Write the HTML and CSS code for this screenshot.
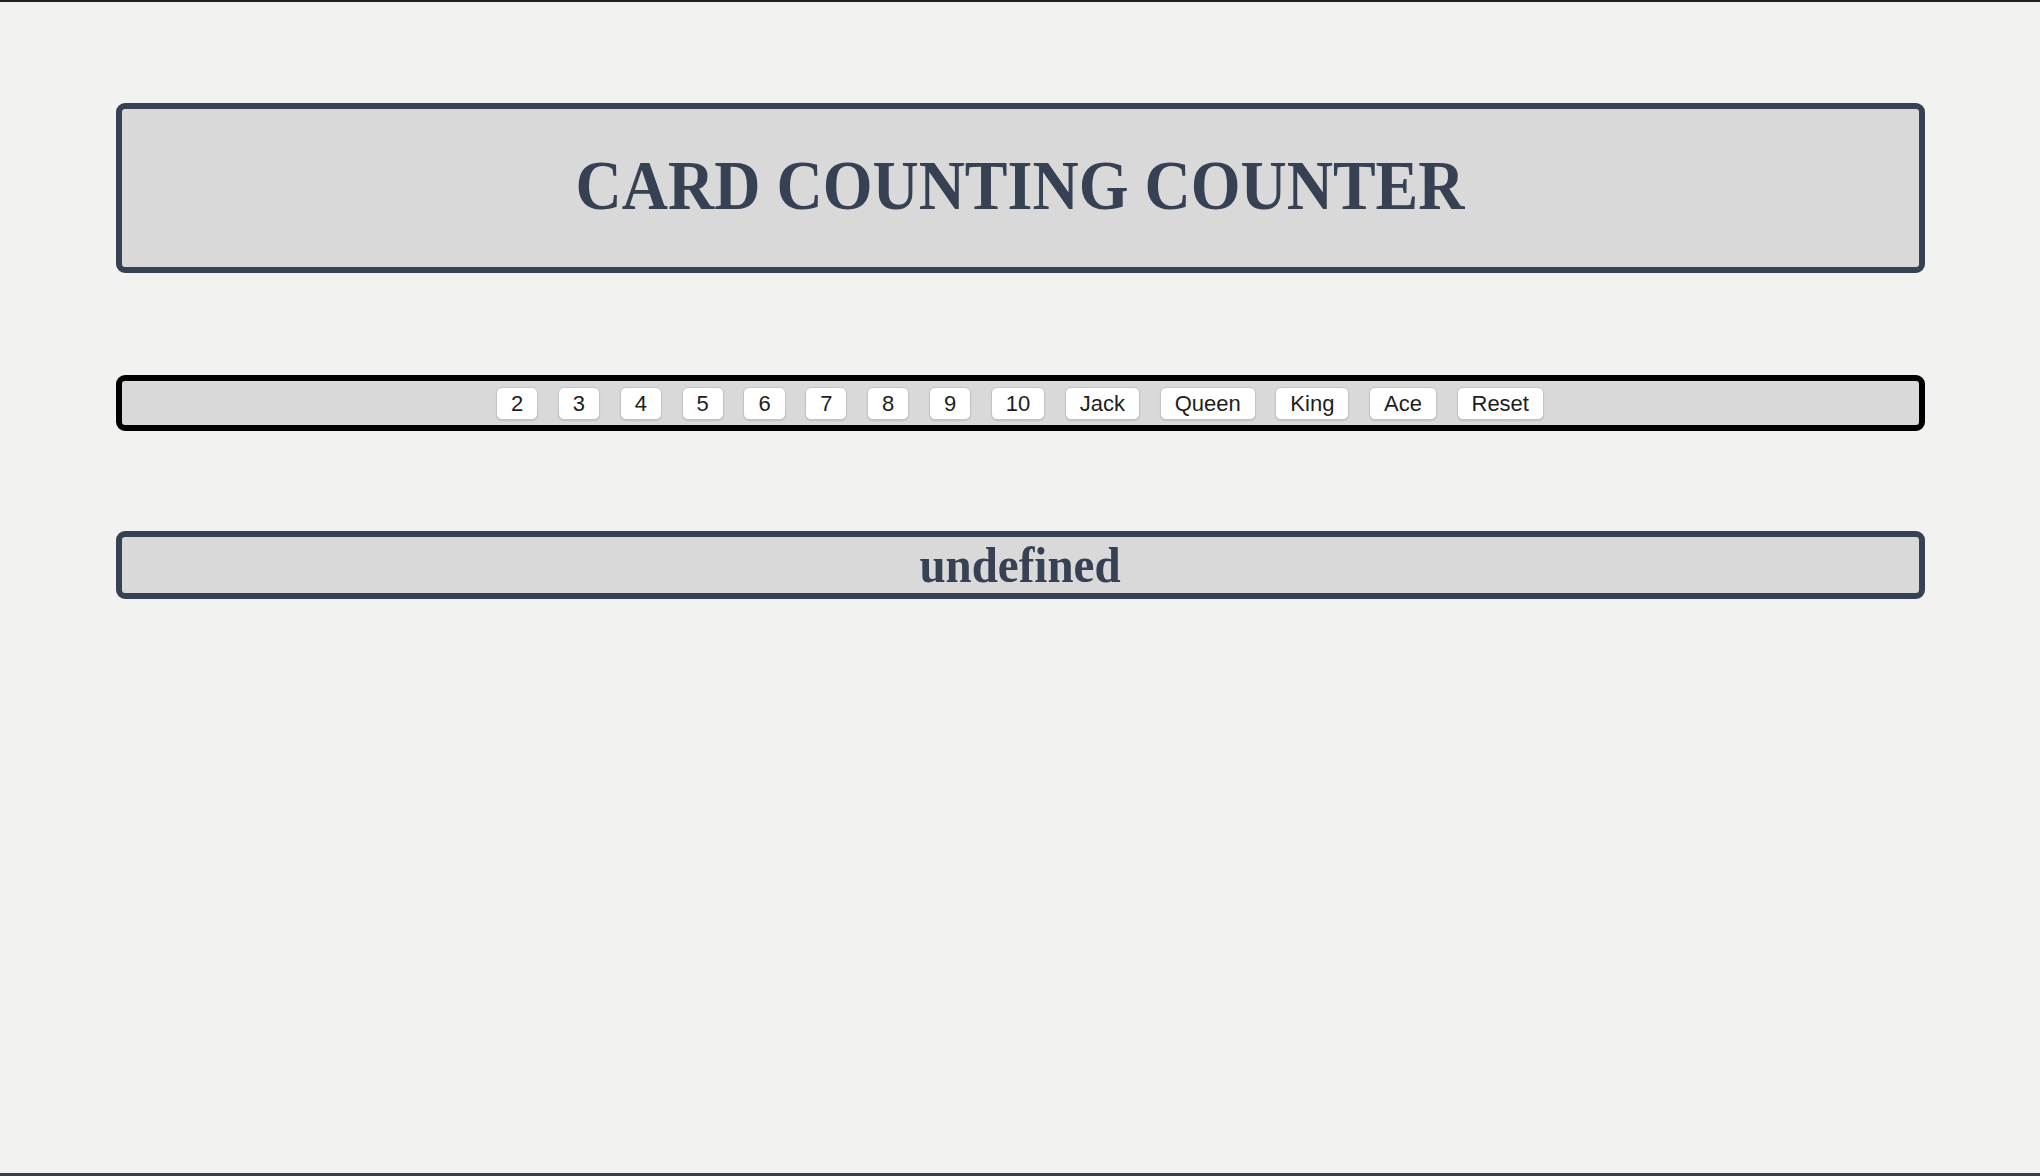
FILE: index.html
```html
<!DOCTYPE html>
<html lang="en">
<head>
<meta charset="utf-8">
<title>Card Counting Counter</title>
<link rel="stylesheet" href="styles.css">
</head>
<body>
<main class="page">
  <header class="panel header">
    <h1 class="title">CARD COUNTING COUNTER</h1>
  </header>
  <section class="bar">
    <button class="card-btn">2</button>
    <button class="card-btn">3</button>
    <button class="card-btn">4</button>
    <button class="card-btn">5</button>
    <button class="card-btn">6</button>
    <button class="card-btn">7</button>
    <button class="card-btn">8</button>
    <button class="card-btn">9</button>
    <button class="card-btn">10</button>
    <button class="card-btn">Jack</button>
    <button class="card-btn">Queen</button>
    <button class="card-btn">King</button>
    <button class="card-btn">Ace</button>
    <button class="card-btn">Reset</button>
  </section>
  <section class="panel result">
    <h2 class="count">undefined</h2>
  </section>
</main>
</body>
</html>
```
FILE: styles.css
```css
html {
  height: 100%;
  box-sizing: border-box;
  background: #f2f2f1;
  border-top: 2px solid #1f1f1f;
  border-bottom: 3px solid #3b3f47;
}
body {
  margin: 0;
  font-family: "Liberation Serif", "Times New Roman", serif;
}
.page {
  width: 1809px;
  margin: 0 auto;
  padding-top: 101px;
  display: flex;
  flex-direction: column;
  gap: 102px;
}
.panel {
  background: #d9d9d9;
  border: 6px solid #364153;
  border-radius: 9px;
  color: #364153;
  text-align: center;
}
.header {
  height: 170px;
  box-sizing: border-box;
  display: flex;
  align-items: center;
  justify-content: center;
}
.title {
  margin: -4px 0 0;
  font-size: 64px;
  font-weight: bold;
  line-height: 1;
  transform: scaleY(1.08);
}
.bar {
  background: #d9d9d9;
  border: 6px solid #000;
  border-radius: 9px;
  height: 56px;
  box-sizing: border-box;
  display: flex;
  align-items: center;
  justify-content: center;
  gap: 19.6px;
  margin-bottom: -2px;
}
.card-btn {
  font-family: "Liberation Sans", Arial, Helvetica, sans-serif;
  font-size: 22px;
  color: #1e1e1e;
  background: #fff;
  border: 1px solid #c4c4c4;
  border-radius: 6px;
  box-shadow: 0 1px 1px rgba(0,0,0,0.12);
  height: 33px;
  padding: 0 14px;
  line-height: 31px;
}
.result {
  height: 68px;
  box-sizing: border-box;
  display: flex;
  align-items: center;
  justify-content: center;
}
.count {
  margin: 0;
  font-size: 47px;
  font-weight: bold;
  line-height: 1;
  transform: scaleY(1.08);
}
```
